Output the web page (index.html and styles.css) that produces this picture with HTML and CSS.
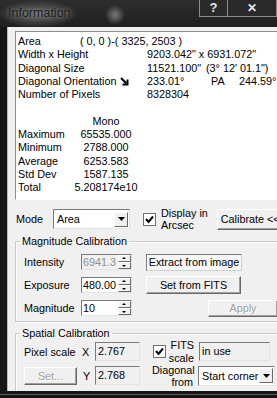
FILE: index.html
```html
<!DOCTYPE html>
<html lang="en">

<head>
    <meta charset="UTF-8">
    <title>Information</title>
    <link rel="stylesheet" href="styles.css">
</head>

<body>
    <div class="window">
        <div class="titlebar">
            <span class="title">Information</span>
            <span class="cbtn help">?</span>
            <span class="cbtn close">&#x2715;</span>
        </div>

        <div class="client">
            <!-- statistics text box -->
            <div class="info">
                <div class="line"><span class="lbl-area">Area</span><span>( 0, 0 )-( 3325, 2503 )</span></div>
                <div class="line"><span class="lbl">Width x Height</span><span>9203.042" x 6931.072"</span></div>
                <div class="line"><span class="lbl">Diagonal Size</span><span class="v1">11521.100"</span><span>(3&deg; 12' 01.1")</span></div>
                <div class="line"><span class="lbl">Diagonal Orientation <svg class="arrow" width="9" height="9" viewBox="0 0 9 9"><path d="M1 1 L6 6 M2.5 7.5 H7.5 V2.5" stroke="#000" stroke-width="2" fill="none"/></svg></span><span class="v2">233.01&deg;</span><span class="pa">PA</span><span>244.59&deg;</span></div>
                <div class="line"><span class="lbl">Number of Pixels</span><span>8328304</span></div>
                <div class="line"></div>
                <div class="line"><span class="lbl-stat"></span><span class="val">Mono</span></div>
                <div class="line"><span class="lbl-stat">Maximum</span><span class="val">65535.000</span></div>
                <div class="line"><span class="lbl-stat">Minimum</span><span class="val">2788.000</span></div>
                <div class="line"><span class="lbl-stat">Average</span><span class="val">6253.583</span></div>
                <div class="line"><span class="lbl-stat">Std Dev</span><span class="val">1587.135</span></div>
                <div class="line"><span class="lbl-stat">Total</span><span class="val">5.208174e10</span></div>
            </div>

            <div class="mode-row">
                <span class="mode-lbl">Mode</span>
                <div class="select mode-select">
                    <span class="sel-text">Area</span>
                    <span class="drop"><svg width="7" height="4" viewBox="0 0 7 4"><path d="M0 0 H7 L3.5 4 Z" fill="#000"/></svg></span>
                </div>
                <span class="check">
                    <svg width="13" height="13" viewBox="0 0 13 13"><rect x="0.5" y="0.5" width="12" height="12" fill="#fff" stroke="#707070"/><path d="M3 6 L5.5 9 L10 3.5" stroke="#000" stroke-width="2" fill="none"/></svg>
                </span>
                <span class="two-line">Display in<br>Arcsec</span>
                <button class="btn calibrate">Calibrate &lt;&lt;</button>
            </div>

            <fieldset class="group mag">
                <legend>Magnitude Calibration</legend>
                <div class="mrow">
                    <span class="mlbl">Intensity</span>
                    <div class="spin disabled"><span class="spin-text">6941.3</span><span class="spin-btns"><i class="up"></i><i class="down"></i></span></div>
                    <button class="btn flat extract">Extract from image</button>
                </div>
                <div class="mrow">
                    <span class="mlbl">Exposure</span>
                    <div class="spin"><span class="spin-text">480.00</span><span class="spin-btns"><i class="up"></i><i class="down"></i></span></div>
                    <button class="btn fits">Set from FITS</button>
                </div>
                <div class="mrow">
                    <span class="mlbl">Magnitude</span>
                    <div class="spin"><span class="spin-text">10</span><span class="spin-btns"><i class="up"></i><i class="down"></i></span></div>
                    <button class="btn off apply">Apply</button>
                </div>
            </fieldset>

            <fieldset class="group spatial">
                <legend>Spatial Calibration</legend>
                <div class="srow">
                    <span class="slbl">Pixel scale</span>
                    <span class="axis">X</span>
                    <div class="edit ro">2.767</div>
                    <span class="check fits-check">
                        <svg width="13" height="13" viewBox="0 0 13 13"><rect x="0.5" y="0.5" width="12" height="12" fill="#fff" stroke="#707070"/><path d="M3 6 L5.5 9 L10 3.5" stroke="#000" stroke-width="2" fill="none"/></svg>
                    </span>
                    <span class="two-line right fits-lbl">FITS<br>scale</span>
                    <div class="edit ro inuse">in use</div>
                </div>
                <div class="srow">
                    <button class="btn off set">Set...</button>
                    <span class="axis y">Y</span>
                    <div class="edit ro">2.768</div>
                    <span class="two-line right diag-lbl">Diagonal<br>from</span>
                    <div class="select corner-select">
                        <span class="sel-text">Start corner</span>
                        <span class="drop"><svg width="7" height="4" viewBox="0 0 7 4"><path d="M0 0 H7 L3.5 4 Z" fill="#000"/></svg></span>
                    </div>
                </div>
            </fieldset>
        </div>
        <div class="frame-bottom"></div>
    </div>
</body>

</html>
```

FILE: styles.css
```css
html,
body {
    margin: 0;
    height: 100%;
    overflow: hidden;
}

body {
    background: #161616;
    font-family: "Liberation Sans", Arial, sans-serif;
    font-size: 10.8px;
    color: #000;
}

.window {
    width: 300px;
}

/* glass title bar */
.titlebar {
    height: 27px;
    display: flex;
    align-items: flex-start;
    background:
        radial-gradient(ellipse 40px 14px at 38px 14px, #6a6a6a, rgba(90, 90, 90, 0)),
        radial-gradient(circle 10px at 115px 15px, #7a7a7a, rgba(120, 120, 120, 0)),
        linear-gradient(#2e2e2e, #1f1f1f);
}

.title {
    padding: 6px 0 0 8px;
    font-size: 12.5px;
    color: #1c1c1c;
    text-shadow: 0 0 4px #9a9a9a;
}

.cbtn {
    height: 16px;
    border: 1px solid #8c8c8c;
    border-top: none;
    color: #e8e8e8;
    font-weight: bold;
    text-align: center;
    line-height: 16px;
    background: #2a2a2a;
}

.help {
    margin-left: auto;
    width: 27px;
    font-size: 13px;
}

.close {
    width: 48px;
    margin-right: 23px;
    border-left: none;
    font-size: 12px;
}

.client {
    margin-left: 7px;
    height: 364px;
    border-left: 1px solid #b8b8b8;
    background: #f0f0f0;
    overflow: hidden;
}

.frame-bottom {
    height: 3px;
    border-bottom: 1px solid #5e5e5e;
}

/* sunken text box */
.info {
    margin: 4px 0 0 7px;
    height: 164px;
    padding: 3px 0 0 2px;
    background: #fff;
    border: 1px solid;
    border-color: #8e8e8e #fff #fff #8e8e8e;
    line-height: 13.3px;
}

.line {
    display: flex;
    height: 13.3px;
    white-space: pre;
}

.lbl {
    width: 129px;
}

.lbl-area {
    width: 62px;
}

.arrow {
    margin-left: 1px;
    vertical-align: -1px;
}

.v1 {
    width: 59px;
}

.v2 {
    width: 64px;
}

.pa {
    width: 28px;
}

.lbl-stat {
    width: 48px;
}

.val {
    width: 80px;
    text-align: center;
}

/* controls */
.mode-row {
    display: flex;
    align-items: center;
    height: 22px;
    margin: 8px 0 0 8px;
}

.mode-lbl {
    width: 37px;
}

.select {
    display: flex;
    align-items: center;
    box-sizing: border-box;
    height: 20px;
    background: #fff;
    border: 1px solid;
    border-color: #7a7a7a #e3e3e3 #e3e3e3 #7a7a7a;
}

.mode-select {
    width: 77px;
}

.sel-text {
    flex: 1;
    padding-left: 3px;
}

.drop {
    box-sizing: border-box;
    width: 14px;
    height: 15px;
    margin-right: 1px;
    display: flex;
    align-items: center;
    justify-content: center;
    background: #f0f0f0;
    border: 1px solid;
    border-color: #fff #696969 #696969 #fff;
}

.check {
    display: flex;
    margin-left: 13px;
    margin-right: 5px;
}

.two-line {
    line-height: 12px;
}

.right {
    text-align: right;
}

.btn {
    box-sizing: border-box;
    font-family: inherit;
    font-size: 10.8px;
    color: #000;
    padding: 0;
    background: #f0f0f0;
    border: 1px solid;
    border-color: #fff #696969 #696969 #fff;
    box-shadow: inset -1px -1px 0 #a0a0a0;
}

.calibrate {
    height: 21px;
    width: 75px;
    margin-left: 9px;
    text-align: left;
    padding-left: 3px;
}

.flat {
    background: #f7f7f7;
    border-color: #7d7d7d #d0d0d0 #d0d0d0 #7d7d7d;
    box-shadow: none;
}

.off {
    color: #a0a0a0;
    text-shadow: 1px 1px 0 #fff;
}

/* group boxes */
.group {
    margin: 5px 0 0 7px;
    padding: 0 0 5px 8px;
    border: 1px solid #c9c9c9;
    box-shadow: 1px 1px 0 #fff, inset 1px 1px 0 #fff;
    width: 320px;
}

.group legend {
    padding: 0 2px;
    margin-left: -4px;
    line-height: 12px;
}

.mrow {
    display: flex;
    align-items: center;
    height: 16px;
    margin-top: 7px;
}

.mlbl {
    width: 57px;
}

.spin {
    display: flex;
    box-sizing: border-box;
    width: 51px;
    height: 16px;
    background: #fff;
    border: 1px solid;
    border-color: #7a7a7a #e3e3e3 #e3e3e3 #7a7a7a;
}

.spin.disabled {
    background: #f0f0f0;
    color: #8f8f8f;
}

.spin-text {
    flex: 1;
    padding-left: 1px;
    line-height: 14px;
}

.spin-btns {
    display: flex;
    flex-direction: column;
    width: 13px;
}

.spin-btns i {
    flex: 1;
    position: relative;
    background: #f0f0f0;
    border: 1px solid;
    border-color: #fff #696969 #696969 #fff;
}

.spin-btns i::after {
    content: "";
    position: absolute;
    left: 3px;
    top: 1px;
    border-left: 2.5px solid transparent;
    border-right: 2.5px solid transparent;
}

.spin-btns .up::after {
    border-bottom: 2px solid #000;
}

.spin-btns .down::after {
    top: 2px;
    border-top: 2px solid #000;
}

.extract {
    width: 96px;
    height: 17px;
    margin-left: 14px;
}

.fits {
    width: 95px;
    height: 18px;
    margin-left: 14px;
}

.apply {
    width: 70px;
    height: 17px;
    margin-left: 76px;
}

.spatial {
    padding-bottom: 20px;
}

.srow {
    display: flex;
    align-items: center;
    height: 19px;
}

.srow:first-of-type {
    margin-top: 3px;
}

.srow + .srow {
    margin-top: 5px;
}

.slbl {
    width: 58px;
}

.axis {
    width: 13px;
}

.axis.y {
    margin-left: 6px;
    width: 12px;
}

.edit {
    box-sizing: border-box;
    width: 45px;
    height: 19px;
    padding-left: 2px;
    line-height: 17px;
    background: #fff;
    border: 1px solid;
    border-color: #7a7a7a #e3e3e3 #e3e3e3 #7a7a7a;
}

.edit.ro {
    background: #f0f0f0;
}

.fits-lbl {
    width: 26px;
    line-height: 13px;
    margin-right: 5px;
    margin-left: -3px;
}

.inuse {
    width: 71px;
}

.set {
    width: 53px;
    height: 18px;
}

.diag-lbl {
    width: 41px;
    margin-left: 12px;
    margin-right: 5px;
}

.corner-select {
    width: 77px;
}
```
